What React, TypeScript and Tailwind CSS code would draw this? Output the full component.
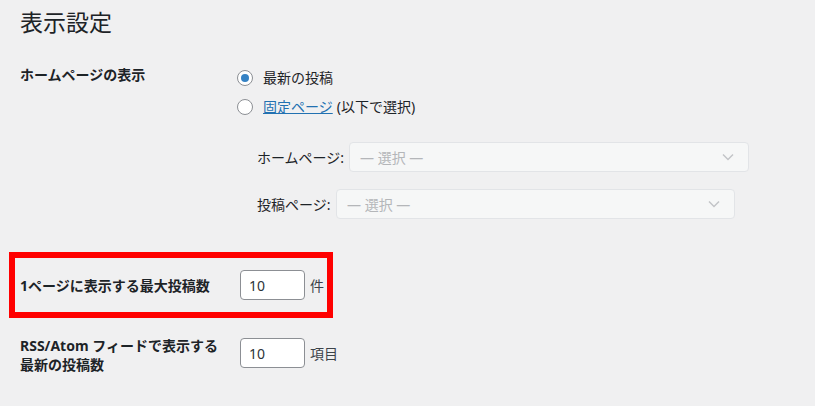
import React from 'react';

const font = { fontFamily: '"Noto Sans", "Noto Sans CJK JP", sans-serif' };

const Radio: React.FC<{ checked?: boolean }> = ({ checked }) => (
  <span className="ml-[-3px] mr-[10px] flex h-4 w-4 shrink-0 items-center justify-center rounded-full border border-[#8c8f94] bg-white">
    {checked && <span className="h-2 w-2 rounded-full bg-[#3582c4]" />}
  </span>
);

const Chevron = () => (
  <svg width="12" height="8" viewBox="0 0 12 8" fill="none">
    <path d="M1 1.5l5 5 5-5" stroke="#c3c4c7" strokeWidth="1.5" />
  </svg>
);

const PageSelect: React.FC<{ label: string; labelWidth: string; width: string }> = ({ label, labelWidth, width }) => (
  <div className="flex items-center pl-[17px]">
    <span className={`${labelWidth} shrink-0 whitespace-nowrap text-[14px] text-[#1d2327]`}>{label}</span>
    <div className={`flex h-[30px] ${width} items-center justify-between rounded-[4px] border border-[#e2e4e7] bg-[#f6f7f7] pl-[10px] pr-[14px]`}>
      <span className="text-[14px] text-[#b4b6b9]">— 選択 —</span>
      <Chevron />
    </div>
  </div>
);

const NumberField: React.FC<{ value: string; unit: string }> = ({ value, unit }) => (
  <div className="flex items-center">
    <div className="flex h-[30px] w-[65px] items-center rounded-[4px] border border-[#8c8f94] bg-white px-2 text-[14px] text-[#2c3338]">
      {value}
    </div>
    <span className="ml-[5px] text-[14px] text-[#3c434a]">{unit}</span>
  </div>
);

export default function App() {
  return (
    <div className="relative h-[406px] w-[815px] overflow-hidden bg-[#f0f0f1] pl-5 text-[#1d2327]" style={font}>
      <h1 className="pt-[7px] text-[23px] font-normal leading-[30px]">表示設定</h1>

      <div className="mt-[26px] flex">
        <div className="w-[220px] shrink-0 text-[14px] font-bold leading-[24px]">ホームページの表示</div>
        <div className="flex flex-col">
          <label className="flex h-[29px] items-center text-[14px]">
            <Radio checked />
            最新の投稿
          </label>
          <label className="flex h-[29px] items-center text-[14px]">
            <Radio />
            <a className="text-[#2271b1] underline">固定ページ</a>
            <span className="ml-1">(以下で選択)</span>
          </label>
          <div className="mt-[21px] flex flex-col gap-[17px]">
            <PageSelect label="ホームページ:" labelWidth="w-[92px]" width="w-[400px]" />
            <PageSelect label="投稿ページ:" labelWidth="w-[79px]" width="w-[399px]" />
          </div>
        </div>
      </div>

      <div className="mt-[51px] flex h-[30px] items-center">
        <div className="w-[220px] shrink-0 text-[14px] font-bold">1ページに表示する最大投稿数</div>
        <NumberField value="10" unit="件" />
      </div>

      <div className="mt-[36px] flex items-start">
        <div className="w-[220px] shrink-0 text-[14px] font-bold leading-[19px]">
          RSS/Atom フィードで表示する
          <br />
          最新の投稿数
        </div>
        <div className="mt-[2px]">
          <NumberField value="10" unit="項目" />
        </div>
      </div>

      <div className="pointer-events-none absolute left-[9px] top-[252px] h-[66px] w-[324px] border-[6px] border-[#ff0000]" />
    </div>
  );
}
